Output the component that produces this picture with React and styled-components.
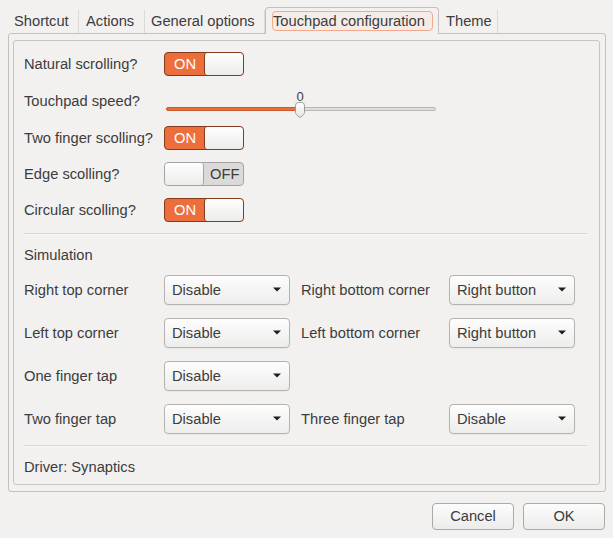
import React from 'react';
import styled, { createGlobalStyle } from 'styled-components';

const Global = createGlobalStyle`
  html, body { margin: 0; padding: 0; background: #f2f1f0; }
  body {
    font-family: "Liberation Sans", Arial, sans-serif;
    font-size: 14.7px;
    color: #3c3c3c;
  }
  * { box-sizing: border-box; }
`;

const Window = styled.div`
  width: 613px;
  height: 538px;
  padding: 0 7px 0 8px;
  display: flex;
  flex-direction: column;
  background: #f2f1f0;
`;

const TabBar = styled.div`
  display: flex;
  align-items: flex-end;
  height: 33px;
  position: relative;
  z-index: 1;
`;

const Tab = styled.div`
  width: ${p => p.$w}px;
  height: 23px;
  padding-left: ${p => p.$pl}px;
  padding-bottom: 1px;
  display: flex;
  align-items: center;
  border-right: 1px solid #dcdad6;
  white-space: nowrap;
`;

const ActiveTab = styled.div`
  width: 174px;
  height: 27px;
  margin-bottom: -1px;
  padding: 3px 5px 3px 6px;
  border: 1px solid #c4c1bd;
  border-bottom: none;
  border-radius: 4px 4px 0 0;
  background: #f2f1f0;
`;

const FocusRing = styled.div`
  height: 20px;
  display: flex;
  align-items: center;
  padding-bottom: 1px;
  border: 1px solid #f2a98c;
  border-radius: 4px;
  background: #f6ece7;
  white-space: nowrap;
`;

const Notebook = styled.div`
  border: 1px solid #c4c1bd;
  border-radius: 3px;
  padding: 6px 5px 6px 4px;
`;

const Frame = styled.div`
  border: 1px solid #c8c5c1;
  border-radius: 3px;
  padding: 11px 12px 8px 10px;
  display: flex;
  flex-direction: column;
`;

const ToggleList = styled.div`
  display: flex;
  flex-direction: column;
  gap: 12px;
`;

const Row = styled.div`
  display: flex;
  align-items: center;
  height: ${p => p.$h || 24}px;
`;

const Label = styled.div`
  width: ${p => p.$w || 140}px;
  flex: none;
  padding-left: ${p => p.$indent || 0}px;
  padding-bottom: 1px;
  white-space: nowrap;
`;

const SwitchBox = styled.div`
  width: 80px;
  height: 24px;
  display: flex;
  border: 1px solid ${p => (p.$on ? '#843c1f' : '#a5a4a2')};
  border-radius: 4px;
  overflow: hidden;
  background: ${p => (p.$on ? '#ec6e3b' : '#dbdad8')};
`;

const SwitchText = styled.div`
  flex: 1;
  display: flex;
  align-items: center;
  padding-left: ${p => (p.$on ? 9 : 6)}px;
  padding-bottom: 1px;
  color: ${p => (p.$on ? '#ffffff' : '#3c3c3c')};
`;

const Knob = styled.div`
  width: 39px;
  flex: none;
  background: linear-gradient(#fefefe, #ececeb);
  border-radius: 3px;
  ${p => (p.$on ? 'border-left: 1px solid #843c1f;' : 'border-right: 1px solid #a5a4a2;')}
`;

function Switch({ on }) {
  return (
    <SwitchBox $on={on}>
      {on ? (
        <>
          <SwitchText $on>ON</SwitchText>
          <Knob $on />
        </>
      ) : (
        <>
          <Knob />
          <SwitchText>OFF</SwitchText>
        </>
      )}
    </SwitchBox>
  );
}

const SliderBox = styled.div`
  position: relative;
  width: 270px;
  height: 26px;
  margin-left: 2px;
`;

const SliderValue = styled.div`
  position: absolute;
  top: 2px;
  font-size: 13px;
  line-height: 13px;
  transform: translateX(-50%);
`;

const Track = styled.div`
  position: absolute;
  top: 19px;
  left: 0;
  right: 0;
  height: 4px;
  border: 1px solid #b9b8b6;
  border-radius: 2px;
  background: #dfdedc;
`;

const TrackFill = styled.div`
  position: absolute;
  top: 19px;
  left: 0;
  height: 4px;
  border: 1px solid #c95b2f;
  border-radius: 2px;
  background: #ec6e3b;
`;

const Thumb = styled.svg`
  position: absolute;
  top: 14px;
  width: 12px;
  height: 16px;
  transform: translateX(-50%);
`;

function Slider({ value, min, max }) {
  const pct = ((value - min) / (max - min)) * 100;
  return (
    <SliderBox>
      <SliderValue style={{ left: `calc(${pct}% - 1px)` }}>{value}</SliderValue>
      <Track />
      <TrackFill style={{ width: `${pct}%` }} />
      <Thumb viewBox="0 0 12 16" style={{ left: `calc(${pct}% - 1px)` }}>
        <defs>
          <linearGradient id="tg" x1="0" y1="0" x2="0" y2="1">
            <stop offset="0" stopColor="#ffffff" />
            <stop offset="1" stopColor="#e6e6e5" />
          </linearGradient>
        </defs>
        <path
          d="M1.5 3.5 Q1.5 0.5 4.5 0.5 H7.5 Q10.5 0.5 10.5 3.5 V10.5 Q10.5 11.5 9.5 12.5 L6.8 15 Q6 15.6 5.2 15 L2.5 12.5 Q1.5 11.5 1.5 10.5 Z"
          fill="url(#tg)"
          stroke="#9d9c9a"
        />
      </Thumb>
    </SliderBox>
  );
}

const Separator = styled.div`
  height: 2px;
  margin-top: 11px;
  border-top: 1px solid #d9d7d3;
  border-bottom: 1px solid #f8f8f7;
`;

const TextRow = styled.div`
  height: 18px;
  margin-top: 11px;
  padding-bottom: 1px;
  display: flex;
  align-items: center;
`;

const ComboGrid = styled.div`
  margin-top: 11px;
  display: grid;
  grid-template-columns: 140px 126px 159px 126px;
  grid-auto-rows: 30px;
  row-gap: 13px;
  align-items: center;
`;

const ComboBox = styled.div`
  height: 30px;
  display: flex;
  align-items: center;
  justify-content: space-between;
  padding: 0 8px 1px 7px;
  border: 1px solid #b6b3af;
  border-radius: 4px;
  background: linear-gradient(#fdfdfd, #ededec);
  box-shadow: 0 1px 1px rgba(0, 0, 0, 0.04);
  white-space: nowrap;
`;

const Arrow = styled.svg`
  width: 8px;
  height: 5px;
  flex: none;
`;

function Combo({ value }) {
  return (
    <ComboBox>
      <span>{value}</span>
      <Arrow viewBox="0 0 8 5">
        <polygon points="0,0.5 8,0.5 4,4.5" fill="#1e1e1e" />
      </Arrow>
    </ComboBox>
  );
}

const Footer = styled.div`
  display: flex;
  justify-content: flex-end;
  gap: 9px;
  margin-top: 11px;
  padding-right: 1px;
`;

const Button = styled.button`
  width: 82px;
  height: 27px;
  font-family: inherit;
  font-size: 14.7px;
  color: #3c3c3c;
  border: 1px solid #acaaa6;
  border-radius: 4px;
  background: linear-gradient(#fcfcfc, #ececeb);
  padding: 0 0 1px;
`;

const combos = [
  ['Right top corner', 'Disable', 'Right bottom corner', 'Right button'],
  ['Left top corner', 'Disable', 'Left bottom corner', 'Right button'],
  ['One finger tap', 'Disable', null, null],
  ['Two finger tap', 'Disable', 'Three finger tap', 'Disable'],
];

export default function App() {
  return (
    <>
      <Global />
      <Window>
        <TabBar>
          <Tab $w={71} $pl={6}>Shortcut</Tab>
          <Tab $w={66} $pl={7}>Actions</Tab>
          <Tab $w={120} $pl={6}>General options</Tab>
          <ActiveTab>
            <FocusRing>Touchpad configuration</FocusRing>
          </ActiveTab>
          <Tab $w={59} $pl={7}>Theme</Tab>
        </TabBar>
        <Notebook>
          <Frame>
            <ToggleList>
              <Row>
                <Label>Natural scrolling?</Label>
                <Switch on />
              </Row>
              <Row $h={26}>
                <Label>Touchpad speed?</Label>
                <Slider value={0} min={-10} max={10} />
              </Row>
              <Row>
                <Label>Two finger scolling?</Label>
                <Switch on />
              </Row>
              <Row>
                <Label>Edge scolling?</Label>
                <Switch on={false} />
              </Row>
              <Row>
                <Label>Circular scolling?</Label>
                <Switch on />
              </Row>
            </ToggleList>
            <Separator />
            <TextRow>Simulation</TextRow>
            <ComboGrid>
              {combos.map(([l1, v1, l2, v2]) => (
                <React.Fragment key={l1}>
                  <Label>{l1}</Label>
                  <Combo value={v1} />
                  {l2 ? <Label $w={159} $indent={11}>{l2}</Label> : <span />}
                  {v2 ? <Combo value={v2} /> : <span />}
                </React.Fragment>
              ))}
            </ComboGrid>
            <Separator />
            <TextRow>Driver: Synaptics</TextRow>
          </Frame>
        </Notebook>
        <Footer>
          <Button>Cancel</Button>
          <Button>OK</Button>
        </Footer>
      </Window>
    </>
  );
}
